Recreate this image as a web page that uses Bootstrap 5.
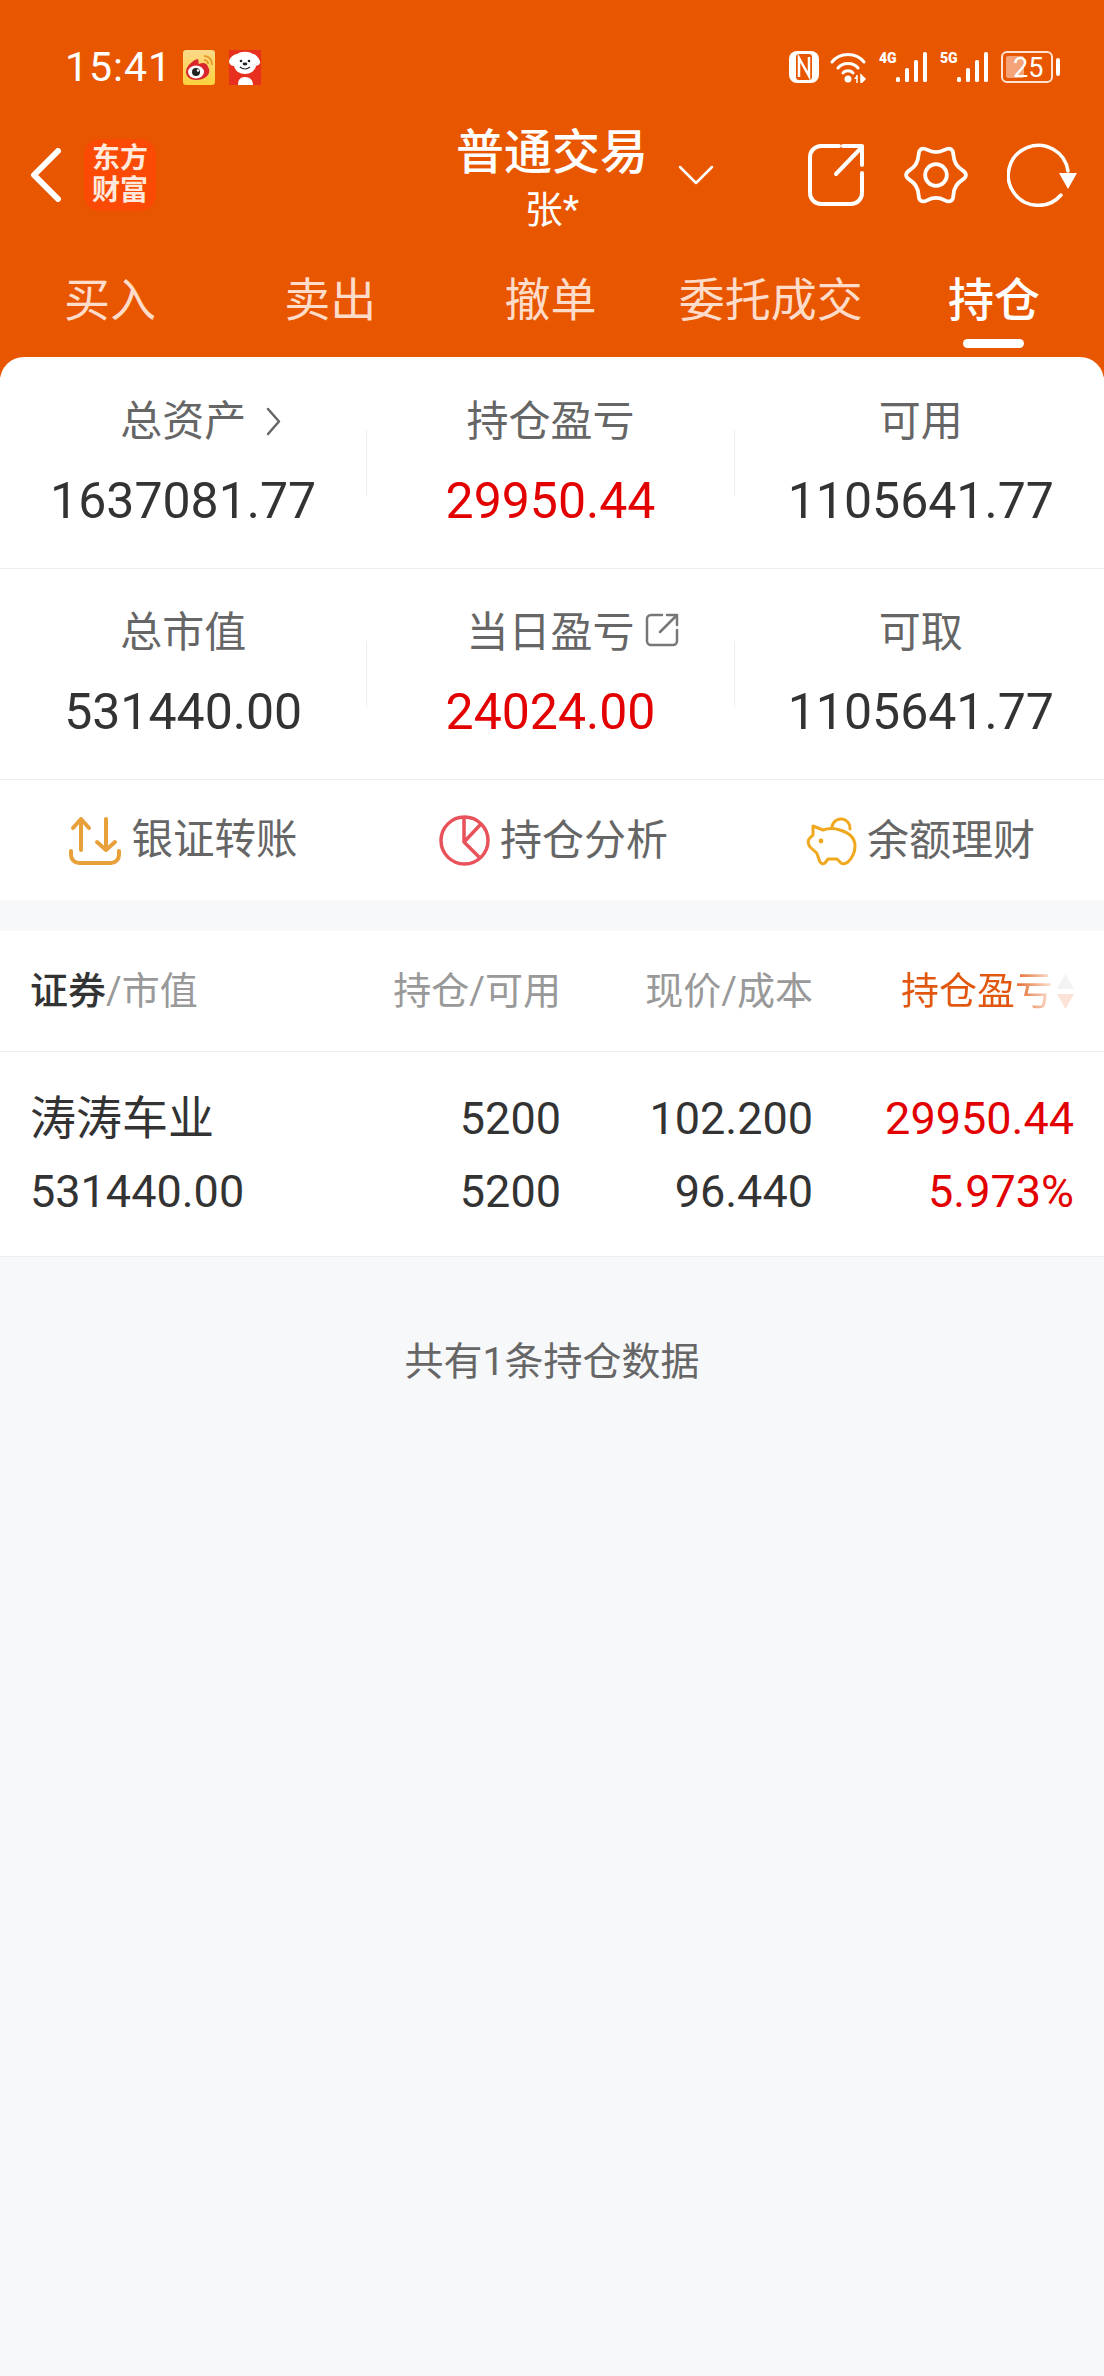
<!DOCTYPE html>
<html lang="zh-CN">
  <head>
    <meta charset="UTF-8" />
    <meta name="viewport" content="width=device-width, initial-scale=1.0" />
    <title>普通交易</title>
    <link href="https://cdn.jsdelivr.net/npm/bootstrap@5.3.0/dist/css/bootstrap.min.css" rel="stylesheet" />
    <style>
      body {
        background: #f7f8fa;
        min-height: 2376px;
        font-family: Roboto, "Noto Sans CJK SC", sans-serif;
        color: #333;
      }
      svg { display: block; flex: none; }
      .hq-top { background: #e85600; height: 377px; color: #fff; }
      .hq-status { height: 100px; padding: 34px 44px 0 65px; }
      .hq-time { font-size: 41px; line-height: 1; letter-spacing: 1px; margin-right: 11px; }
      .hq-status-icons { gap: 11px; }
      .hq-apps { gap: 14px; }
      .hq-head { height: 150px; }
      .hq-side { flex: 1 1 0; }
      .hq-title { padding-top: 26px; text-align: center; width: 200px; }
      .hq-title-main { font-size: 48px; line-height: 54px; font-weight: 500; }
      .hq-title-sub { font-size: 38px; line-height: 50px; margin-top: 5px; }
      .hq-logo { width: 72px; height: 72px; background: #fb4a06; border-radius: 16px; font-size: 28px; line-height: 32px; font-weight: 700; color: #ffe9dc; margin-left: 22px; }
      .hq-back { margin-left: 30px; }
      .hq-caret { margin-left: 26px; }
      .hq-tools { gap: 38px; padding-right: 26px; }
      .hq-tab { flex: 1 1 0; text-align: center; font-size: 46px; line-height: 54px; padding-top: 23px; color: #ffdcc9; }
      .hq-tab-on { color: #fff; font-weight: 500; padding-left: 3px; }
      .hq-tab-bar { width: 61px; height: 9px; border-radius: 5px; background: #fff; margin: 12px auto 0; }
      .hq-panel { background: #fff; border-radius: 24px 24px 0 0; margin-top: -20px; padding-top: 1px; position: relative; }
      .hq-stats { border-bottom: 1px solid #eee; padding: 35px 0 36px; }
      .hq-stat { flex: 1 1 0; text-align: center; }
      .hq-stat:last-child { padding-left: 3px; }
      .hq-sep { width: 1px; height: 66px; background: #eee; align-self: center; flex: none; }
      .hq-label { font-size: 42px; line-height: 58px; color: #666; }
      .hq-num { font-size: 50px; line-height: 62px; margin-top: 19px; }
      .hq-red { color: #e20000; }
      .hq-after { display: inline-block; vertical-align: baseline; }
      .hq-after-arrow { margin: 0 -35px 0 20px; }
      .hq-after-link { margin: 0 -44px 0 10px; }
      .hq-actions { height: 120px; }
      .hq-action { flex: 1 1 0; gap: 10px; font-size: 42px; color: #666; }
      .hq-action:first-child { padding-right: 3px; font-size: 41.5px; }
      .hq-table { background: #fff; margin-top: 31px; font-size: 38px; }
      .hq-cells { padding: 0 30px; }
      .hq-cell-a { flex: 1 1 0; }
      .hq-cell-b { width: 200px; text-align: right; }
      .hq-cell-c { width: 252px; text-align: right; }
      .hq-cell-d { width: 261px; }
      .hq-thead { height: 121px; border-bottom: 1px solid #eee; color: #999; }
      .hq-thead strong { font-weight: 500; color: #333; }
      .hq-sort { background: linear-gradient(90deg, #e2570f 72%, rgba(226, 87, 15, 0.15) 100%); -webkit-background-clip: text; background-clip: text; color: transparent; white-space: nowrap; }
      .hq-row { font-size: 45px; line-height: 73px; padding-top: 30px; padding-bottom: 28px; border-bottom: 1px solid #eee; }
      .hq-row .hq-cell-d { text-align: right; }
      .hq-stock { font-size: 46px; }
      .hq-foot { font-size: 39px; line-height: 56px; color: #666; text-align: center; padding-top: 77px; }
    </style>
  </head>
  <body>
    <div class="hq-top">
      <div class="hq-status d-flex align-items-center">
        <span class="hq-time">15:41</span>
        <div class="hq-apps d-flex">
          <svg width="32" height="35" viewBox="0 0 32 35">
            <defs><linearGradient id="wbBg" x1="0" y1="0" x2="0" y2="1"><stop offset="0" stop-color="#fbd98a" /><stop offset="1" stop-color="#fdd23c" /></linearGradient></defs>
            <rect width="32" height="35" rx="3" fill="url(#wbBg)" />
            <path d="M3 22C3 16 10 10 15 9C16 12 15 13 16 14C20 12 24 13 25 17C27 19 27 24 23 27C18 31 8 31 5 27C4 26 3 24 3 22Z" fill="#d8262c" />
            <ellipse cx="13" cy="22" rx="8" ry="6.5" fill="#fff" />
            <circle cx="13" cy="22" r="4" fill="#222" />
            <circle cx="15" cy="20.5" r="1.2" fill="#fff" />
            <path d="M21 6A8 8 0 0 1 29 15M21 10A4 4 0 0 1 25 14" fill="none" stroke="#e79a2a" stroke-width="2" />
          </svg>
          <svg width="32" height="35" viewBox="0 0 32 35">
            <rect width="32" height="35" fill="#e8301f" />
            <path d="M8 4C12 1 20 1 24 4C27 4 32 10 31 13C30 16 28 15 27 16C26 21 21 24 16 24C11 24 6 21 5 16C3 16 1 15 0 12C0 8 5 4 8 4Z" fill="#fff" />
            <path d="M9 35C9 30 11 27 16 27C21 27 24 30 24 35Z" fill="#fff" />
            <circle cx="12" cy="11" r="1.3" fill="#222" />
            <circle cx="20" cy="11" r="1.3" fill="#222" />
            <ellipse cx="16" cy="14" rx="2.4" ry="1.4" fill="#222" />
            <path d="M11 17Q16 21 21 17" fill="none" stroke="#222" stroke-width="1.2" />
          </svg>
        </div>
        <div class="hq-status-icons d-flex align-items-center ms-auto">
          <svg width="30" height="32" viewBox="0 0 30 32">
            <rect width="30" height="32" rx="8" fill="#fff" />
            <rect x="7" y="3" width="16" height="26" rx="3" fill="#e85600" />
            <path d="M10 26V7L20 25V6" fill="none" stroke="#fff" stroke-width="2.5" />
          </svg>
          <svg width="38" height="32" viewBox="0 0 38 32">
            <path d="M2 11C10 1 26 1 34 11M8 17C13 11 23 11 28 17M13 22C15 19 21 19 23 22" fill="none" stroke="#fff" stroke-width="3" stroke-linecap="round" />
            <circle cx="18" cy="28" r="3.5" fill="#fff" />
            <path d="M27 24V32M31 32V24L35 28Z" stroke="#fff" stroke-width="1.5" fill="#fff" />
            <path d="M27 24L24 28H27" fill="#fff" />
          </svg>
          <svg width="50" height="32" viewBox="0 0 50 32">
            <text x="0" y="12" font-family="Roboto" font-size="14" font-weight="900" fill="#fff">4G</text>
            <rect x="17" y="26" width="4" height="5" rx="1.5" fill="#fff" />
            <rect x="26" y="17" width="4" height="14" rx="1.5" fill="#fff" />
            <rect x="35" y="9" width="4" height="22" rx="1.5" fill="#fff" />
            <rect x="44" y="1" width="4" height="30" rx="1.5" fill="#fff" />
          </svg>
          <svg width="50" height="32" viewBox="0 0 50 32">
            <text x="0" y="12" font-family="Roboto" font-size="14" font-weight="900" fill="#fff">5G</text>
            <rect x="17" y="26" width="4" height="5" rx="1.5" fill="#fff" />
            <rect x="26" y="17" width="4" height="14" rx="1.5" fill="#fff" />
            <rect x="35" y="9" width="4" height="22" rx="1.5" fill="#fff" />
            <rect x="44" y="1" width="4" height="30" rx="1.5" fill="#fff" />
          </svg>
          <svg width="59" height="32" viewBox="0 0 59 32">
            <rect x="1" y="1" width="50" height="30" rx="5" fill="none" stroke="#ffe3d2" stroke-width="2" />
            <rect x="5" y="5" width="18" height="22" rx="2" fill="#f4a478" />
            <text x="12" y="26" font-family="Roboto" font-size="27" fill="#fff">25</text>
            <rect x="55" y="7" width="4" height="18" rx="2" fill="#fff" />
          </svg>
        </div>
      </div>

      <div class="hq-head d-flex">
        <div class="hq-side d-flex align-items-center">
          <svg class="hq-back" width="32" height="54" viewBox="0 0 32 54"><path d="M28 3L4 27L28 51" fill="none" stroke="#fff" stroke-width="6" stroke-linecap="round" stroke-linejoin="round" /></svg>
          <div class="hq-logo d-flex align-items-center justify-content-center text-center">东方<br />财富</div>
        </div>
        <div class="hq-title">
          <div class="hq-title-main">普通交易</div>
          <div class="hq-title-sub">张*</div>
        </div>
        <div class="hq-side d-flex align-items-center">
          <svg class="hq-caret" width="36" height="21" viewBox="0 0 36 21"><path d="M2 2L18 18L34 2" fill="none" stroke="#fff" stroke-width="2.5" stroke-linecap="round" stroke-linejoin="round" /></svg>
          <div class="hq-tools d-flex align-items-center ms-auto">
            <svg width="58" height="64" viewBox="0 0 58 64">
              <path d="M32 3H14A11 11 0 0 0 3 14V50A11 11 0 0 0 14 61H44A11 11 0 0 0 55 50V30" fill="none" stroke="#fff" stroke-width="4" stroke-linecap="round" />
              <path d="M29 31L55 4M36 3H55V22" fill="none" stroke="#fff" stroke-width="4" stroke-linecap="round" stroke-linejoin="round" />
            </svg>
            <svg width="66" height="64" viewBox="-2 -1 70 66">
              <path d="M60.5 26.5Q69 32 60.5 37.5Q52.05 43 51.5 53.1Q51 63.2 42 58.6Q33 54 24 58.6Q15 63.2 14.5 53.1Q13.95 43 5.5 37.5Q-3 32 5.5 26.5Q13.95 21 14.5 10.9Q15 .8 24 5.4Q33 10 42 5.4Q51 .8 51.5 10.9Q52.05 21 60.5 26.5Z" fill="none" stroke="#fff" stroke-width="4" stroke-linejoin="round" />
              <circle cx="33" cy="32" r="11.5" fill="none" stroke="#fff" stroke-width="4" />
            </svg>
            <svg width="71" height="64" viewBox="0 0 71 64">
              <path d="M54 52A30 30 0 1 1 61 28" fill="none" stroke="#fff" stroke-width="3.5" stroke-linecap="round" />
              <path d="M52 30H70L61 46Z" fill="#fff" />
            </svg>
          </div>
        </div>
      </div>

      <div class="d-flex">
        <div class="hq-tab">买入</div>
        <div class="hq-tab">卖出</div>
        <div class="hq-tab">撤单</div>
        <div class="hq-tab">委托成交</div>
        <div class="hq-tab hq-tab-on">持仓<div class="hq-tab-bar"></div></div>
      </div>
    </div>

    <div class="hq-panel">
      <div class="hq-stats d-flex">
        <div class="hq-stat">
          <div class="hq-label">总资产<svg class="hq-after hq-after-arrow" width="15" height="29" viewBox="0 0 15 29"><path d="M2 2L13 14.5L2 27" fill="none" stroke="#666" stroke-width="2.5" stroke-linecap="round" stroke-linejoin="round" /></svg></div>
          <div class="hq-num">1637081.77</div>
        </div>
        <div class="hq-sep"></div>
        <div class="hq-stat">
          <div class="hq-label">持仓盈亏</div>
          <div class="hq-num hq-red">29950.44</div>
        </div>
        <div class="hq-sep"></div>
        <div class="hq-stat">
          <div class="hq-label">可用</div>
          <div class="hq-num">1105641.77</div>
        </div>
      </div>
      <div class="hq-stats d-flex">
        <div class="hq-stat">
          <div class="hq-label">总市值</div>
          <div class="hq-num">531440.00</div>
        </div>
        <div class="hq-sep"></div>
        <div class="hq-stat">
          <div class="hq-label">当日盈亏<svg class="hq-after hq-after-link" width="34" height="34" viewBox="0 0 34 34"><path d="M17 2H6A4 4 0 0 0 2 6V28A4 4 0 0 0 6 32H28A4 4 0 0 0 32 28V17M15 19L32 2M22 2H32V12" fill="none" stroke="#777" stroke-width="2.5" stroke-linecap="round" stroke-linejoin="round" /></svg></div>
          <div class="hq-num hq-red">24024.00</div>
        </div>
        <div class="hq-sep"></div>
        <div class="hq-stat">
          <div class="hq-label">可取</div>
          <div class="hq-num">1105641.77</div>
        </div>
      </div>
      <div class="hq-actions d-flex">
        <div class="hq-action d-flex align-items-center justify-content-center">
          <svg width="52" height="49" viewBox="0 0 52 49">
            <path d="M12 34V3M4 12L12 3L20 12M37 3V34M28 26L37 34L46 26M2 35V39A8 8 0 0 0 10 47H42A8 8 0 0 0 50 39V35" fill="none" stroke="#e8a13a" stroke-width="4" stroke-linecap="round" stroke-linejoin="round" />
          </svg>
          银证转账
        </div>
        <div class="hq-action d-flex align-items-center justify-content-center">
          <svg width="51" height="51" viewBox="0 0 51 51">
            <circle cx="25.5" cy="25.5" r="23.5" fill="none" stroke="#e8525a" stroke-width="3.5" />
            <path d="M25 2V27L42 9M25 27L40 42" fill="none" stroke="#e8525a" stroke-width="3.5" stroke-linejoin="round" />
          </svg>
          持仓分析
        </div>
        <div class="hq-action d-flex align-items-center justify-content-center">
          <svg width="51" height="51" viewBox="0 0 51 51">
            <path d="M7 11L17 15Q25 12 34 15C44 18 49 24 49 31C49 38 46 43 42 47Q38 50 35 48L31 44H22L19 48Q16 50 14 47L10.7 38L4 32Q1 27 3 24L7 20Z" fill="none" stroke="#f0a81e" stroke-width="3" stroke-linejoin="round" />
            <path d="M26 12A9 9 0 1 1 44 14" fill="none" stroke="#f0a81e" stroke-width="3" stroke-linecap="round" />
            <circle cx="15" cy="26" r="2.4" fill="#f0a81e" />
          </svg>
          余额理财
        </div>
      </div>
    </div>

    <div class="hq-table">
      <div class="hq-thead hq-cells d-flex align-items-center">
        <div class="hq-cell-a"><strong>证券</strong>/市值</div>
        <div class="hq-cell-b">持仓/可用</div>
        <div class="hq-cell-c">现价/成本</div>
        <div class="hq-cell-d d-flex align-items-center justify-content-end gap-1">
          <span class="hq-sort">持仓盈亏</span>
          <svg width="17" height="35" viewBox="0 0 17 35">
            <path d="M8.5 0L17 15H0Z" fill="#f2f3f5" />
            <path d="M0 20H17L8.5 35Z" fill="#fbe3d8" />
          </svg>
        </div>
      </div>
      <div class="hq-row hq-cells d-flex">
        <div class="hq-cell-a"><span class="hq-stock">涛涛车业</span><br />531440.00</div>
        <div class="hq-cell-b">5200<br />5200</div>
        <div class="hq-cell-c">102.200<br />96.440</div>
        <div class="hq-cell-d hq-red">29950.44<br />5.973%</div>
      </div>
    </div>
    <div class="hq-foot">共有1条持仓数据</div>
    <script src="https://cdn.jsdelivr.net/npm/bootstrap@5.3.0/dist/js/bootstrap.bundle.min.js"></script>
  </body>
</html>
